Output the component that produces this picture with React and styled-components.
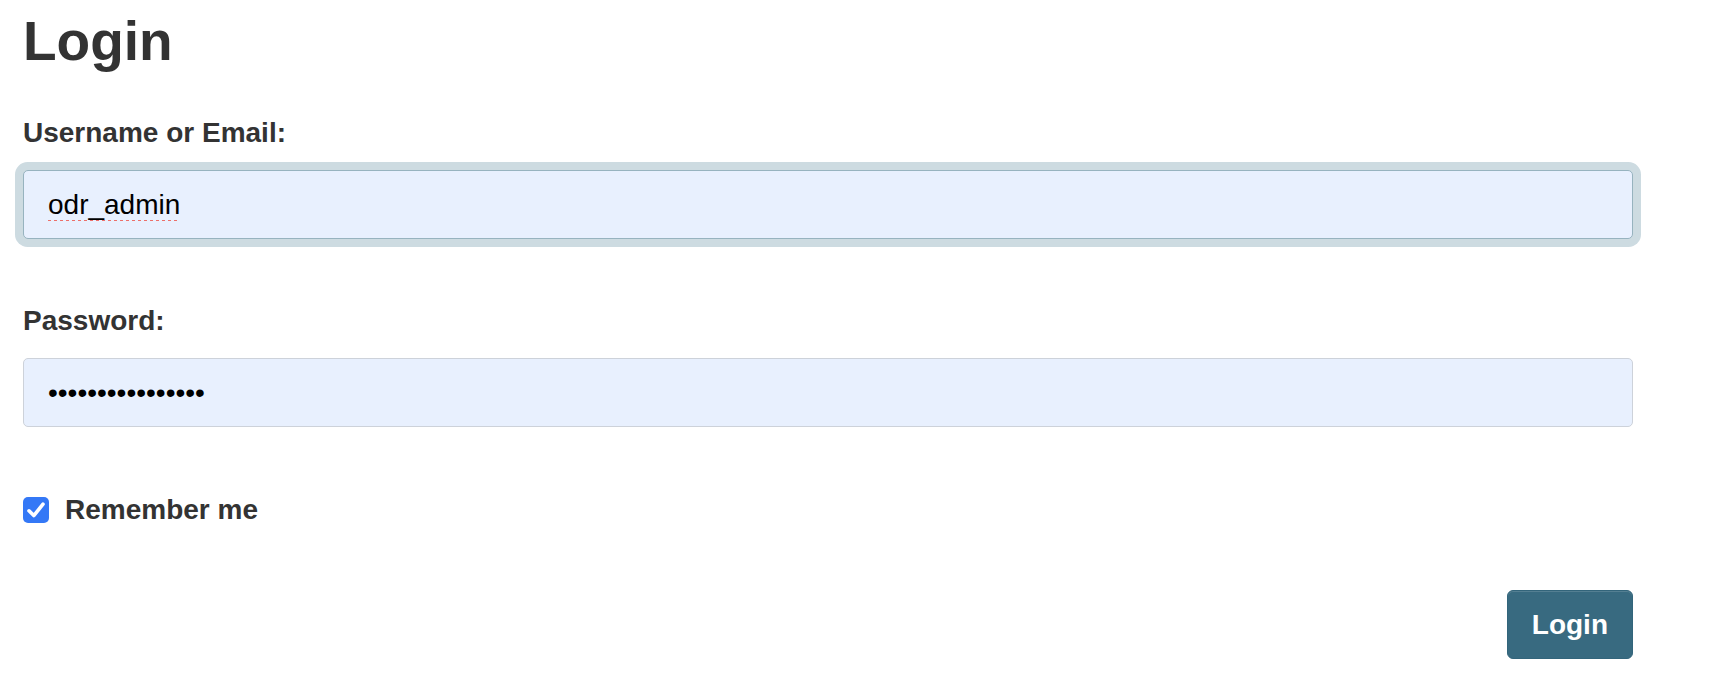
import React from "react";
import styled, { createGlobalStyle } from "styled-components";

const GlobalStyle = createGlobalStyle`
  html, body {
    margin: 0;
    padding: 0;
    background: #ffffff;
    overflow: hidden;
  }
  body {
    font-family: "Liberation Sans", Arial, Helvetica, sans-serif;
    color: #333333;
  }
`;

const Page = styled.div`
  box-sizing: border-box;
  width: 1710px;
  height: 682px;
  padding: 10px 77px 0 23px;
`;

const Title = styled.h1`
  margin: 0;
  font-size: 55px;
  line-height: 63px;
  font-weight: 700;
  color: #333333;
`;

const Form = styled.form`
  display: flex;
  flex-direction: column;
  margin-top: 43px;
`;

const Field = styled.div`
  display: flex;
  flex-direction: column;
  gap: 20px;
  & + & {
    margin-top: 65px;
  }
`;

const Label = styled.label`
  font-size: 28px;
  line-height: 34px;
  font-weight: 700;
  color: #333333;
`;

const TextInput = styled.input`
  box-sizing: border-box;
  width: 100%;
  height: 69px;
  margin: 0;
  padding: 0 24px;
  border: 1px solid ${(p) => (p.$focused ? "#97b3bf" : "#cdd2da")};
  border-radius: 5px;
  background: #e8f0fe;
  color: #000000;
  font-family: "Liberation Sans", Arial, Helvetica, sans-serif;
  font-size: 28px;
  outline: none;
  box-shadow: ${(p) => (p.$focused ? "0 0 0 8px #cddbe1" : "none")};
  text-decoration: ${(p) => (p.$misspelled ? "underline dotted #ec6f6a" : "none")};
  text-underline-offset: 6px;
  text-decoration-thickness: 3px;
`;

const CheckRow = styled.label`
  display: flex;
  align-items: center;
  gap: 16px;
  margin-top: 66px;
  height: 34px;
  font-size: 28px;
  font-weight: 700;
  color: #333333;
`;

const CheckBox = styled.span`
  display: flex;
  align-items: center;
  justify-content: center;
  width: 26px;
  height: 26px;
  border-radius: 5px;
  background: #3478f6;
  flex: none;
`;

const Actions = styled.div`
  display: flex;
  justify-content: flex-end;
  margin-top: 63px;
`;

const Button = styled.button`
  box-sizing: border-box;
  height: 69px;
  padding: 0 24px;
  border: 1px solid #33657b;
  border-radius: 6px;
  background: #386a80;
  box-shadow: inset 0 1px 0 rgba(255, 255, 255, 0.14);
  color: #ffffff;
  font-family: "Liberation Sans", Arial, Helvetica, sans-serif;
  font-size: 28px;
  font-weight: 700;
  cursor: pointer;
`;

export default function App() {
  return (
    <>
      <GlobalStyle />
      <Page>
        <Title>Login</Title>
        <Form onSubmit={(e) => e.preventDefault()}>
          <Field>
            <Label htmlFor="username">Username or Email:</Label>
            <TextInput
              id="username"
              type="text"
              defaultValue="odr_admin"
              spellCheck={false}
              $focused
              $misspelled
            />
          </Field>
          <Field>
            <Label htmlFor="password">Password:</Label>
            <TextInput id="password" type="password" defaultValue="abcdefghijklmnop" />
          </Field>
          <CheckRow>
            <CheckBox>
              <svg width="26" height="26" viewBox="0 0 26 26" fill="none">
                <path
                  d="M6 13.8 L10.8 18.6 L20 7.2"
                  stroke="#ffffff"
                  strokeWidth="3.6"
                  strokeLinecap="round"
                  strokeLinejoin="round"
                />
              </svg>
            </CheckBox>
            Remember me
          </CheckRow>
          <Actions>
            <Button type="submit">Login</Button>
          </Actions>
        </Form>
      </Page>
    </>
  );
}
